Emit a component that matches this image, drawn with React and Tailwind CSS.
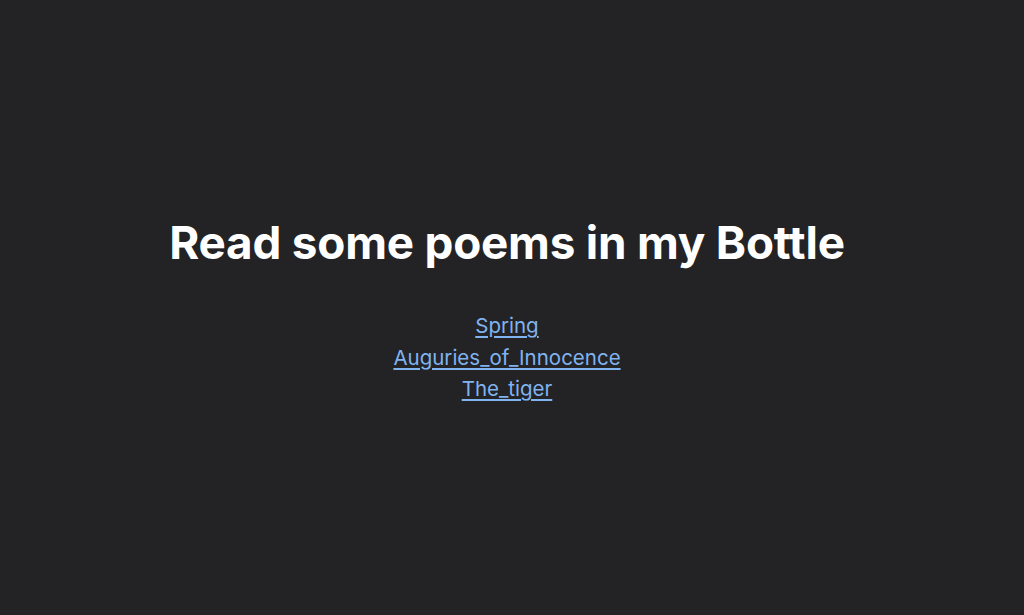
export default function App() {
  const poems = ["Spring", "Auguries_of_Innocence", "The_tiger"];
  return (
    <div className="min-h-[615px] w-full bg-[#232325] flex flex-col items-center justify-center font-['Inter',sans-serif] pr-[10px] pt-[5px]">
      <h1 className="text-[45.8px] leading-[56px] font-bold text-white tracking-[-0.2px]">Read some poems in my Bottle</h1>
      <ul className="mt-[39px] flex flex-col items-center">
        {poems.map((p) => (
          <li key={p} className="text-[20.5px] leading-[31.5px]">
            <a href="#" className="text-[#80b3f0] underline underline-offset-[3px]">{p}</a>
          </li>
        ))}
      </ul>
    </div>
  );
}
